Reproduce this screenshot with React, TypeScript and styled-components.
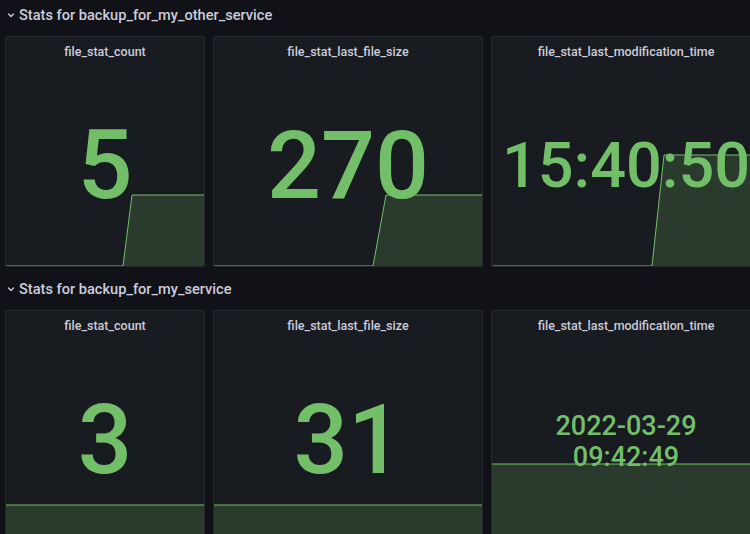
import React from 'react';
import styled, { createGlobalStyle } from 'styled-components';

type Spark = {
  // polyline in panel pixels, y measured from the panel top
  line: [number, number][];
};

type Stat = {
  title: string;
  value: string[];
  size: number;
  spark: Spark;
};

type Row = {
  title: string;
  stats: Stat[];
};

const GlobalStyle = createGlobalStyle`
  html, body {
    margin: 0;
    padding: 0;
    background: #111217;
    overflow: hidden;
  }
  body {
    font-family: Roboto, "Liberation Sans", sans-serif;
    color: #ccccdc;
  }
`;

const Page = styled.div`
  width: 750px;
  height: 534px;
  padding: 1px 0 0 5px;
  box-sizing: border-box;
  overflow: hidden;
`;

const Section = styled.section`
  margin-bottom: 8px;
`;

const RowHeader = styled.div`
  height: 28px;
  display: flex;
  align-items: center;
  gap: 2px;
  font-size: 14.6px;
  font-weight: 500;
  color: #ccccdc;
`;

const Chevron = styled.svg`
  width: 12px;
  height: 12px;
  flex: none;
`;

const Grid = styled.div`
  margin-top: 7px;
  display: grid;
  grid-template-columns: 200px 270px 270px;
  gap: 8px;
`;

const Panel = styled.div`
  position: relative;
  height: 231px;
  background: #181b1f;
  border: 1px solid rgba(204, 204, 220, 0.07);
  border-radius: 2px;
  box-sizing: border-box;
  overflow: hidden;
  display: flex;
  flex-direction: column;
`;

const PanelTitle = styled.div`
  height: 28px;
  flex: none;
  display: flex;
  align-items: center;
  justify-content: center;
  font-size: 12.5px;
  font-weight: 500;
  color: #ccccdc;
  position: relative;
  z-index: 1;
`;

const Body = styled.div`
  flex: 1;
  display: flex;
  align-items: center;
  justify-content: center;
  position: relative;
  z-index: 1;
`;

const Value = styled.div<{ $size: number; $multi: boolean }>`
  font-size: ${(p) => p.$size}px;
  line-height: ${(p) => (p.$multi ? '31px' : `${p.$size}px`)};
  padding-top: ${(p) => (p.$multi ? 4 : 0)}px;
  font-weight: 500;
  color: #73bf69;
  text-align: center;
  white-space: nowrap;
`;

const Sparkline = styled.svg`
  position: absolute;
  left: 0;
  top: 0;
  width: 100%;
  height: 100%;
  z-index: 0;
`;

const slope = (x1: number, x2: number, top: number): Spark => ({
  line: [
    [0, 229],
    [x1, 229],
    [x2, top],
    [400, top],
  ],
});

const flat = (top: number): Spark => ({
  line: [
    [0, top],
    [400, top],
  ],
});

const rows: Row[] = [
  {
    title: 'Stats for backup_for_my_other_service',
    stats: [
      { title: 'file_stat_count', value: ['5'], size: 97, spark: slope(117, 126, 158) },
      { title: 'file_stat_last_file_size', value: ['270'], size: 95, spark: slope(159, 172, 158) },
      { title: 'file_stat_last_modification_time', value: ['15:40:50'], size: 63, spark: slope(160, 172, 118) },
    ],
  },
  {
    title: 'Stats for backup_for_my_service',
    stats: [
      { title: 'file_stat_count', value: ['3'], size: 96, spark: flat(194) },
      { title: 'file_stat_last_file_size', value: ['31'], size: 96, spark: flat(194) },
      { title: 'file_stat_last_modification_time', value: ['2022-03-29', '09:42:49'], size: 27, spark: flat(153) },
    ],
  },
];

const StatPanel: React.FC<{ stat: Stat }> = ({ stat }) => {
  const pts = stat.spark.line;
  const d = pts.map(([x, y], i) => `${i ? 'L' : 'M'}${x} ${y}`).join(' ');
  const fill = `${d} L400 240 L0 240 Z`;
  return (
    <Panel>
      <Sparkline>
        <path d={fill} fill="rgba(115, 191, 105, 0.2)" />
        <path d={d} fill="none" stroke="#73bf69" strokeWidth={1} />
      </Sparkline>
      <PanelTitle>{stat.title}</PanelTitle>
      <Body>
        <Value $size={stat.size} $multi={stat.value.length > 1}>
          {stat.value.map((v) => (
            <div key={v}>{v}</div>
          ))}
        </Value>
      </Body>
    </Panel>
  );
};

const App: React.FC = () => {
  return (
    <>
      <GlobalStyle />
      <Page>
        {rows.map((row) => (
          <Section key={row.title}>
            <RowHeader>
              <Chevron viewBox="0 0 12 12">
                <path d="M3.5 5 L6 7.5 L8.5 5" fill="none" stroke="#ccccdc" strokeWidth={1.3} strokeLinecap="round" strokeLinejoin="round" />
              </Chevron>
              {row.title}
            </RowHeader>
            <Grid>
              {row.stats.map((s) => (
                <StatPanel key={s.title} stat={s} />
              ))}
            </Grid>
          </Section>
        ))}
      </Page>
    </>
  );
};

export default App;
